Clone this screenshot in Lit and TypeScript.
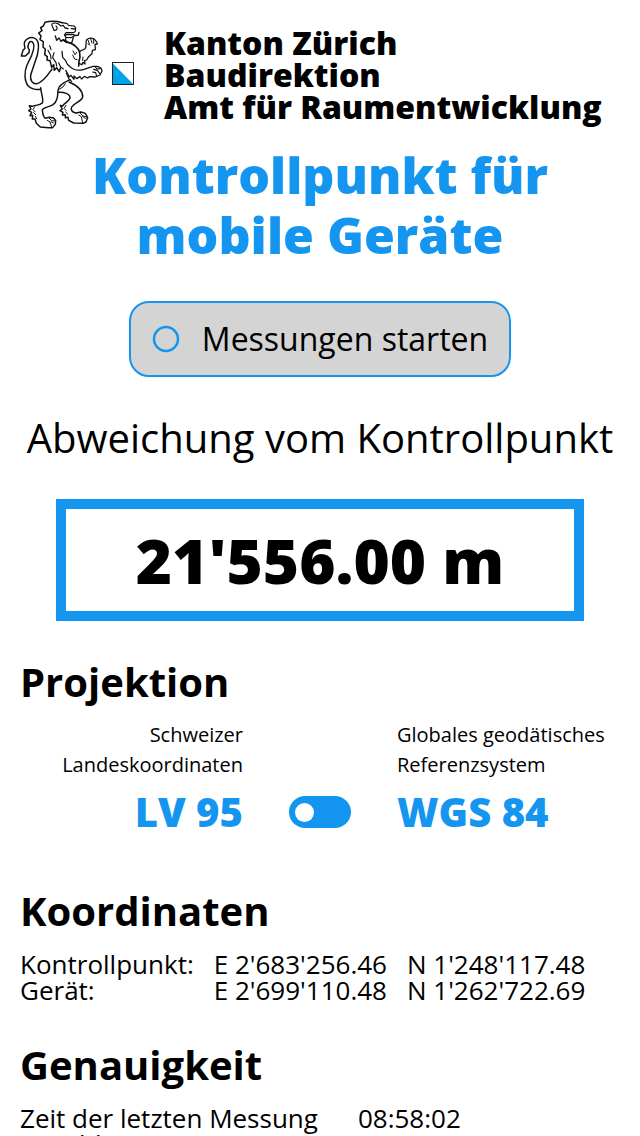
import { LitElement, html, css } from "lit";
import { customElement, state } from "lit/decorators.js";

@customElement("zh-logo")
class ZhLogo extends LitElement {
  static styles = css`
    :host { display: flex; align-items: center; gap: 8px; flex: none; }
    .lion { width: 84px; height: 110px; display: block; }
    .flag { width: 22px; height: 23px; display: block; margin-bottom: 3px; }
  `;
  render() {
    return html`
      <svg class="lion" viewBox="60 60 252 330" fill="none" stroke="#111" stroke-width="3.4" stroke-linejoin="round" stroke-linecap="round" aria-hidden="true">
        <path d="M187 68C173 64 150 63 135 67L130 78L122 83L126 92L116 99L123 108L120 119L130 125L129 141L136 148L134 164L142 170L141 180L150 182L155 202L161 194L163 211L170 203L178 215L181 205" stroke-width="4.5"/>
        <path d="M187 68L202 71L205 76L222 78L227 83L226 94L221 98L198 98L193 105L198 112L213 113L224 107"/>
        <path d="M196 105L204 103L220 104L228 107L235 105L237 97M198 112L196 121L205 128L215 129L218 119L220 112M197 84L204 86M214 86L225 87" stroke-width="4"/>
        <path d="M157 79C151 69 165 67 174 71L183 78L190 76M157 79L162 91C173 93 173 82 168 78M190 76L195 84" stroke-width="3.6"/>
        <path d="M166 108L170 121L177 114L183 124L190 119L200 128" stroke-width="4"/>
        <path d="M190 120C199 127 216 128 227 139C242 151 243 165 237 184L236 198" stroke-width="5"/>
        <path d="M239 154L254 147C262 142 255 128 260 119C268 112 282 112 290 126L292 132L285 133L286 149L277 151L276 161L266 170L260 180L254 182L255 192L249 187L246 194L238 191" stroke-width="3.8"/>
        <path d="M264 120L268 131M272 116L276 129M281 117L281 130M264 132L270 135M219 153L225 164L230 157M218 165L224 177L231 179M249 171L248 182" stroke-width="3"/>
        <path d="M186 154L188 172L197 182L202 193L210 200C222 212 239 212 252 208L279 199L292 199L303 204L306 213L300 225L286 231L268 230L263 234L253 229L245 237L240 230L230 236L222 228L222 238L213 226L207 231L202 219L197 211" stroke-width="3.8"/>
        <path d="M285 200L291 207L300 206M281 208L292 211L299 220M278 216L287 218L290 229M144 151L152 166L153 177M162 158L158 173L168 188L170 198M149 137L153 149M176 188L182 201L190 207M199 220L207 237L215 244" stroke-width="3.4"/>
        <path d="M156 207C144 224 132 245 111 251C96 253 90 239 92 225L105 186C115 162 121 128 108 117C92 106 71 119 73 134L75 145L69 151L64 168L76 168L87 158L88 150L84 143C84 129 89 122 96 125C107 133 101 151 95 166L81 195C72 216 73 244 85 258C96 268 109 270 122 268" stroke-width="4.4"/>
        <path d="M122 263C123 282 132 296 127 309C119 317 105 315 96 319L88 317L93 327L86 332L95 337L90 347L98 346L97 357L105 357L109 370L121 381L145 383L158 383L166 373L167 362L161 354L148 352L136 355C128 350 128 338 127 330C129 321 145 323 159 314C173 303 173 288 174 271C174 260 190 248 210 239" stroke-width="4.4"/>
        <path d="M104 320L99 329L105 335M101 338L107 344M106 349L110 356M147 354L155 362L166 363M142 361L150 366L155 382M153 365L160 369" stroke-width="3"/>
        <path d="M176 277C190 276 211 281 210 294C205 307 192 309 188 318L181 316L187 327L180 332L189 337L187 345L196 344L196 353L204 352L206 361L221 369L249 370L258 366L263 353L256 340L243 336L228 339C216 337 211 329 215 321C222 308 244 306 248 291C249 267 226 254 207 246" stroke-width="4.4"/>
        <path d="M198 316L192 325L198 331M197 336L203 342M240 339L248 347L261 352M236 345L244 350L248 368M248 350L256 355M175 269L189 261L196 251" stroke-width="3"/>
      </svg>
      <svg class="flag" viewBox="0 0 22 23" aria-hidden="true">
        <rect x=".5" y=".5" width="21" height="22" fill="#fff"/>
        <path d="M.5 1V22.500H21.500Z" fill="#00a4e4"/>
        <rect x=".5" y=".5" width="21" height="22" fill="none" stroke="#222"/>
      </svg>
    `;
  }
}

@customElement("app-root")
class AppRoot extends LitElement {
  @state() private wgs = false;

  static styles = css`
    :host {
      display: block;
      box-sizing: border-box;
      padding: 20px;
      background: #fff;
      color: #000;
      font-family: "Open Sans", "Noto Sans", sans-serif;
      --blue: #1496f0;
    }
    h1, h2, p { margin: 0; }
    .head { display: flex; align-items: center; gap: 30px; }
    .office { font-size: 32px; line-height: 32px; font-weight: 800; }
    .office p { white-space: nowrap; }
    .title {
      margin: 15px auto 0;
      max-width: 480px;
      text-align: center;
      color: var(--blue);
      font-size: 50px;
      line-height: 60px;
      font-weight: 800;
    }
    .start {
      display: flex;
      align-items: center;
      gap: 22px;
      margin: 36px auto 0;
      padding: 14px 21px;
      border: 2px solid var(--blue);
      border-radius: 20px;
      background: #d4d4d4;
      color: #000;
      font: inherit;
      font-size: 32px;
      line-height: 44px;
    }
    .ring { width: 28px; height: 28px; display: block; }
    .lead { margin-top: 35px; text-align: center; font-size: 40px; line-height: 52px; white-space: nowrap; }
    .value {
      margin: 35px 36px 0;
      border: 10px solid var(--blue);
      text-align: center;
      font-size: 62px;
      line-height: 102px;
      font-weight: 800;
    }
    .section { font-size: 40px; line-height: 52px; font-weight: 700; }
    .projection { margin-top: 35px; }
    .systems {
      display: grid;
      grid-template-columns: 1fr 62px 1fr;
      column-gap: 46px;
      align-items: end;
      margin-top: 12px;
    }
    .system { font-size: 20px; line-height: 30px; }
    .system.left { text-align: right; }
    .system span { display: block; }
    .system .short { color: var(--blue); font-size: 40px; line-height: 64px; font-weight: 800; }
    .toggle {
      appearance: none;
      display: flex;
      align-items: center;
      box-sizing: border-box;
      width: 62px;
      height: 32px;
      margin: 0 0 16px;
      padding: 0 6px;
      border-radius: 16px;
      background: var(--blue);
    }
    .toggle::before { content: ""; width: 19px; height: 19px; border-radius: 50%; background: #fff; }
    .toggle:checked { justify-content: flex-end; }
    .coordinates { margin-top: 41px; }
    .accuracy { margin-top: 36px; }
    .data { border-collapse: collapse; margin-top: 14px; font-size: 26px; line-height: 26px; white-space: nowrap; }
    .data th, .data td { padding: 0 20px 0 0; text-align: left; font-weight: 400; }
    .data.wide th { padding-right: 40px; }
  `;

  render() {
    return html`
      <header class="head">
        <zh-logo></zh-logo>
        <div class="office">
          <p>Kanton Zürich</p>
          <p>Baudirektion</p>
          <p>Amt für Raumentwicklung</p>
        </div>
      </header>
      <main>
        <h1 class="title">Kontrollpunkt für mobile Geräte</h1>
        <button class="start" type="button">
          <svg class="ring" viewBox="0 0 28 28" aria-hidden="true">
            <circle cx="14" cy="14" r="12" fill="none" stroke="#1496f0" stroke-width="2.500"/>
          </svg>
          Messungen starten
        </button>
        <p class="lead">Abweichung vom Kontrollpunkt</p>
        <p class="value">21'556.00 m</p>

        <section class="projection">
          <h2 class="section">Projektion</h2>
          <div class="systems">
            <label class="system left" for="projection">
              <span>Schweizer</span><span>Landeskoordinaten</span>
              <span class="short">LV 95</span>
            </label>
            <input class="toggle" id="projection" type="checkbox" role="switch" .checked=${this.wgs}
              @change=${(e: Event) => (this.wgs = (e.target as HTMLInputElement).checked)}>
            <label class="system" for="projection">
              <span>Globales geodätisches</span><span>Referenzsystem</span>
              <span class="short">WGS 84</span>
            </label>
          </div>
        </section>

        <section class="coordinates">
          <h2 class="section">Koordinaten</h2>
          <table class="data">
            <tr><th scope="row">Kontrollpunkt:</th><td>E 2'683'256.46</td><td>N 1'248'117.48</td></tr>
            <tr><th scope="row">Gerät:</th><td>E 2'699'110.48</td><td>N 1'262'722.69</td></tr>
          </table>
        </section>

        <section class="accuracy">
          <h2 class="section">Genauigkeit</h2>
          <table class="data wide">
            <tr><th scope="row">Zeit der letzten Messung</th><td>08:58:02</td></tr>
            <tr><th scope="row">Anzahl Messungen</th><td></td></tr>
          </table>
        </section>
      </main>
    `;
  }
}
